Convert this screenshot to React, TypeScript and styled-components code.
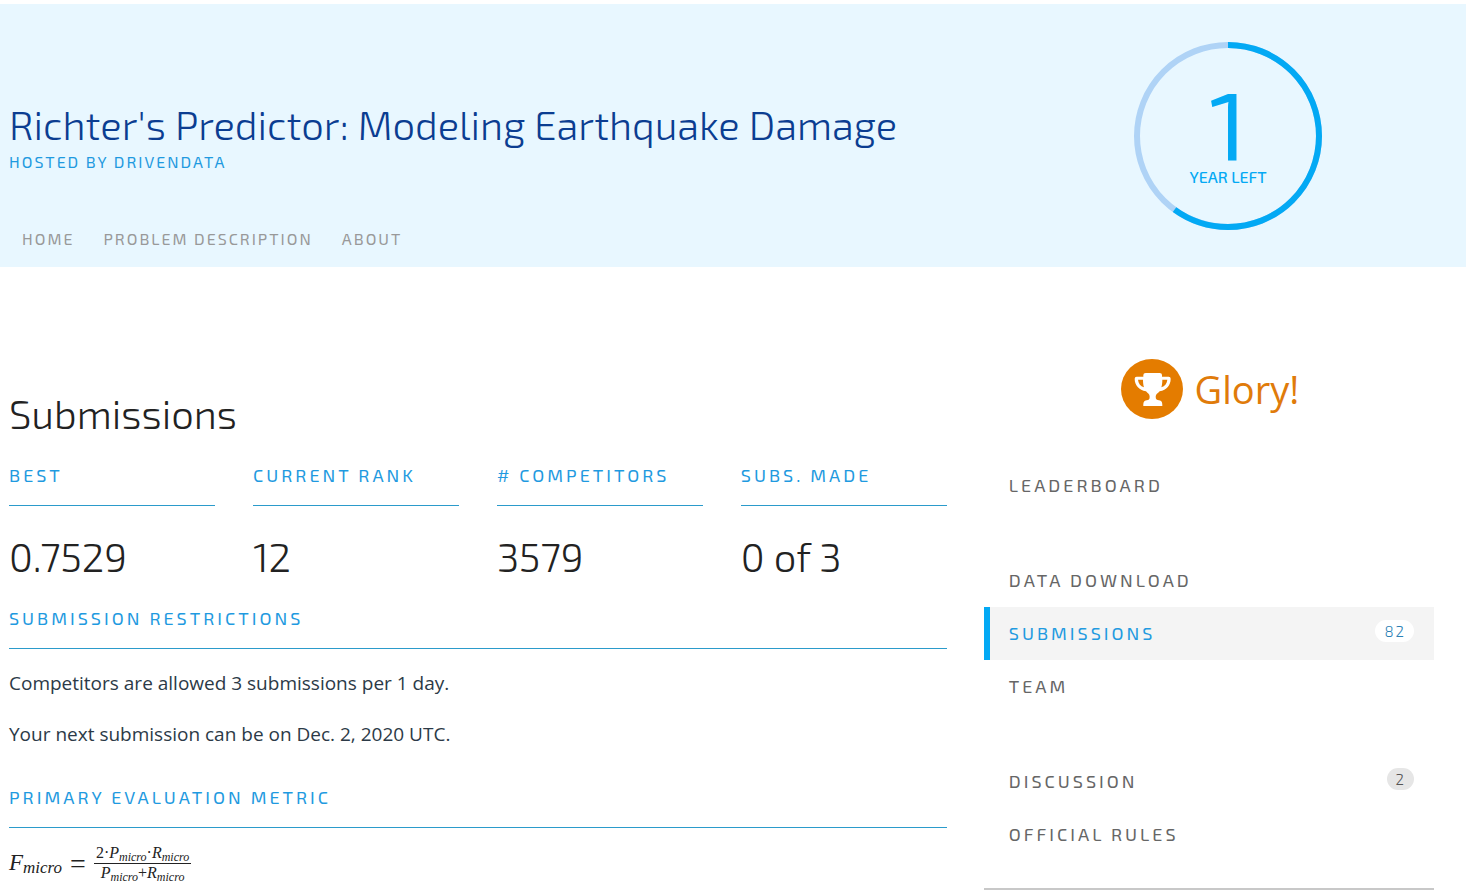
import React from 'react';
import styled, { createGlobalStyle } from 'styled-components';

const DISPLAY = "'Exo 2', Roboto, sans-serif";
const BODY = "'Open Sans', sans-serif";
const MATH = "'Liberation Serif', serif";

const GlobalStyle = createGlobalStyle`
  * { box-sizing: border-box; }
  body {
    margin: 0;
    background: #fff;
    color: #222;
    font-family: ${BODY};
  }
  h1, h2, h3, p, dl, dt, dd, ul { margin: 0; padding: 0; }
  ul { list-style: none; }
  a { text-decoration: none; }
`;

const Banner = styled.header`
  display: grid;
  grid-template-columns: minmax(0, 33fr) minmax(0, 16fr);
  margin-top: 4px;
  padding-left: 9px;
  background: #e8f7ff;
`;

const BannerText = styled.div`
  padding: 96px 0 14px;
`;

const Title = styled.h1`
  font: 300 40px/48px ${DISPLAY};
  color: #0b3d91;
`;

const Host = styled.p`
  font: 400 16px/20px ${DISPLAY};
  letter-spacing: 2px;
  text-transform: uppercase;
  color: #1f9ae0;
  margin-top: 4px;
`;

const TopNav = styled.nav`
  display: flex;
  gap: 29px;
  margin-top: 53px;
  padding: 2px 13px;
`;

const TopLink = styled.a`
  font: 400 16px/24px ${DISPLAY};
  letter-spacing: 2px;
  text-transform: uppercase;
  color: #999;
`;

const Countdown = styled.div`
  display: grid;
  justify-content: center;
  align-content: start;
  padding-top: 38px;

  > * { grid-area: 1 / 1; }
`;

const CountdownText = styled.div`
  display: flex;
  flex-direction: column;
  align-items: center;
  padding-top: 36px;
  font-family: ${DISPLAY};
  color: #03a9f4;
`;

const CountdownNumber = styled.span`
  font-size: 96px;
  line-height: 88px;
`;

const CountdownUnit = styled.span`
  margin-top: 3px;
  font-size: 16px;
  font-weight: 500;
  line-height: 16px;
  text-transform: uppercase;
`;

const Page = styled.div`
  display: grid;
  grid-template-columns: minmax(0, 25fr) minmax(0, 12fr);
  column-gap: 37px;
  padding: 0 32px 0 9px;
`;

const Main = styled.main`
  padding-top: 122px;
`;

const PageHeading = styled.h2`
  font: 300 40px/48px ${DISPLAY};
  margin-bottom: 26px;
`;

const Stats = styled.dl`
  display: grid;
  grid-template-columns: repeat(4, minmax(0, 1fr));
  column-gap: 38px;
`;

const labelStyle = `
  font: 400 18px/24px ${DISPLAY};
  letter-spacing: 3px;
  text-transform: uppercase;
  color: #1f9ae0;
  padding-bottom: 18px;
  border-bottom: 1px solid #2b9bcb;
`;

const StatLabel = styled.dt`
  ${labelStyle}
`;

const StatValue = styled.dd`
  font: 300 40px/48px ${DISPLAY};
  margin-top: 26px;
`;

const Section = styled.section<{ $gap: number }>`
  margin-top: ${({ $gap }) => $gap}px;
`;

const SectionHeading = styled.h3`
  ${labelStyle}
`;

const Text = styled.p`
  font: 400 19px/30px ${BODY};
  color: #2c3a47;
  margin-top: 19px;

  & + & { margin-top: 21px; }
`;

const Formula = styled.div<{ $size: number }>`
  display: flex;
  align-items: center;
  gap: 8px;
  margin-top: 16px;
  font: 400 ${({ $size }) => $size}px/24px ${MATH};
`;

const Equals = styled.span`
  font-size: 28px;
`;

const Symbol = styled.i<{ $sub: number }>`
  sub {
    font-size: ${({ $sub }) => $sub}px;
    line-height: 1;
    vertical-align: -3px;
  }
`;

const Fraction = styled.span`
  display: flex;
  flex-direction: column;
  align-items: center;
  font-size: 16px;
  line-height: 18px;
`;

const Numerator = styled.span`
  border-bottom: 1px solid #222;
  padding: 0 2px;
`;

const Sidebar = styled.aside`
  padding-top: 92px;
`;

const Prize = styled.div`
  display: flex;
  align-items: center;
  justify-content: center;
  gap: 12px;
  padding-left: 2px;
  font: 400 38px/60px ${BODY};
  color: #e07b0a;
`;

const Menu = styled.nav`
  margin-top: 40px;
  padding-bottom: 27px;
  border-bottom: 2px solid #c8c8c8;
`;

const MenuGroup = styled.ul`
  & + & { margin-top: 42px; }
`;

const MenuLink = styled.a<{ $active?: boolean }>`
  display: flex;
  align-items: center;
  justify-content: space-between;
  height: 53px;
  padding: 0 20px 1px 19px;
  border-left: 6px solid ${({ $active }) => ($active ? '#03a9f4' : 'transparent')};
  background: ${({ $active }) => ($active ? '#f4f4f4' : 'transparent')};
  font: 400 18px/24px ${DISPLAY};
  letter-spacing: 3px;
  text-transform: uppercase;
  color: ${({ $active }) => ($active ? '#1f9ae0' : '#666')};
`;

const Badge = styled.span<{ $active?: boolean }>`
  padding: 0 8px 0 9px;
  margin-bottom: 4px;
  border-radius: 12px;
  background: ${({ $active }) => ($active ? '#fff' : '#e6e6e6')};
  font-size: 15px;
  font-weight: 300;
  line-height: 22px;
  letter-spacing: 2px;
  color: ${({ $active }) => ($active ? '#2a80b5' : '#555')};
`;

const Ring = () => (
  <svg width="188" height="188" viewBox="0 0 188 188" fill="none" aria-hidden="true">
    <circle cx="94" cy="94" r="91" stroke="#afd3f6" strokeWidth="6" />
    <circle
      cx="94"
      cy="94"
      r="91"
      stroke="#03a9f4"
      strokeWidth="6"
      pathLength="100"
      strokeDasharray="60 40"
      transform="rotate(-90 94 94)"
    />
  </svg>
);

const Trophy = () => (
  <svg width="62" height="60" viewBox="0 0 186 180" aria-hidden="true">
    <ellipse cx="93" cy="90" rx="93" ry="90" fill="#e47c00" />
    <path
      fill="#fff"
      fillRule="evenodd"
      d="M67 48q0-6 7-6h42q7 0 7 6v5h20q6 0 6 6c0 20-12 34-33 38-6 7-12 8-12 16 0 8 4 10 10 11 8 1 10 6 10 17H67c0-11 2-16 10-17 6-1 9-3 9-11 0-8-5-9-11-16-21-4-34-18-34-38q0-6 6-6h20zM66 62H51c1 11 7 19 18 23-2-7-3-14-3-23zM124 62c0 9-1 16-3 23 11-4 17-12 18-23z"
    />
  </svg>
);

const stats = [
  { label: 'Best', value: '0.7529' },
  { label: 'Current Rank', value: '12' },
  { label: '# Competitors', value: '3579' },
  { label: 'Subs. Made', value: '0 of 3' },
];

const menu: { label: string; count?: number; active?: boolean }[][] = [
  [{ label: 'Leaderboard' }],
  [{ label: 'Data download' }, { label: 'Submissions', count: 82, active: true }, { label: 'Team' }],
  [{ label: 'Discussion', count: 2 }, { label: 'Official rules' }],
];

const Micro = ({ letter, sub }: { letter: string; sub: number }) => (
  <Symbol $sub={sub}>
    {letter}
    <sub>micro</sub>
  </Symbol>
);

export default function App() {
  return (
    <>
      <GlobalStyle />
      <Banner>
        <BannerText>
          <Title>Richter's Predictor: Modeling Earthquake Damage</Title>
          <Host>Hosted by DrivenData</Host>
          <TopNav>
            <TopLink href="#home">Home</TopLink>
            <TopLink href="#problem">Problem description</TopLink>
            <TopLink href="#about">About</TopLink>
          </TopNav>
        </BannerText>
        <Countdown>
          <Ring />
          <CountdownText>
            <CountdownNumber>1</CountdownNumber>
            <CountdownUnit>Year left</CountdownUnit>
          </CountdownText>
        </Countdown>
      </Banner>
      <Page>
        <Main>
          <PageHeading>Submissions</PageHeading>
          <Stats>
            {stats.map((s) => (
              <div key={s.label}>
                <StatLabel>{s.label}</StatLabel>
                <StatValue>{s.value}</StatValue>
              </div>
            ))}
          </Stats>
          <Section $gap={26}>
            <SectionHeading>Submission restrictions</SectionHeading>
            <Text>Competitors are allowed 3 submissions per 1 day.</Text>
            <Text>Your next submission can be on Dec. 2, 2020 UTC.</Text>
          </Section>
          <Section $gap={36}>
            <SectionHeading>Primary evaluation metric</SectionHeading>
            <Formula $size={23}>
              <Micro letter="F" sub={17} />
              <Equals>=</Equals>
              <Fraction>
                <Numerator>
                  2·
                  <Micro letter="P" sub={12} />·<Micro letter="R" sub={12} />
                </Numerator>
                <span>
                  <Micro letter="P" sub={12} />+<Micro letter="R" sub={12} />
                </span>
              </Fraction>
            </Formula>
          </Section>
        </Main>
        <Sidebar>
          <Prize>
            <Trophy />
            <span>Glory!</span>
          </Prize>
          <Menu>
            {menu.map((group) => (
              <MenuGroup key={group[0].label}>
                {group.map((item) => (
                  <li key={item.label}>
                    <MenuLink href="#" $active={item.active}>
                      {item.label}
                      {item.count !== undefined && <Badge $active={item.active}>{item.count}</Badge>}
                    </MenuLink>
                  </li>
                ))}
              </MenuGroup>
            ))}
          </Menu>
        </Sidebar>
      </Page>
    </>
  );
}
